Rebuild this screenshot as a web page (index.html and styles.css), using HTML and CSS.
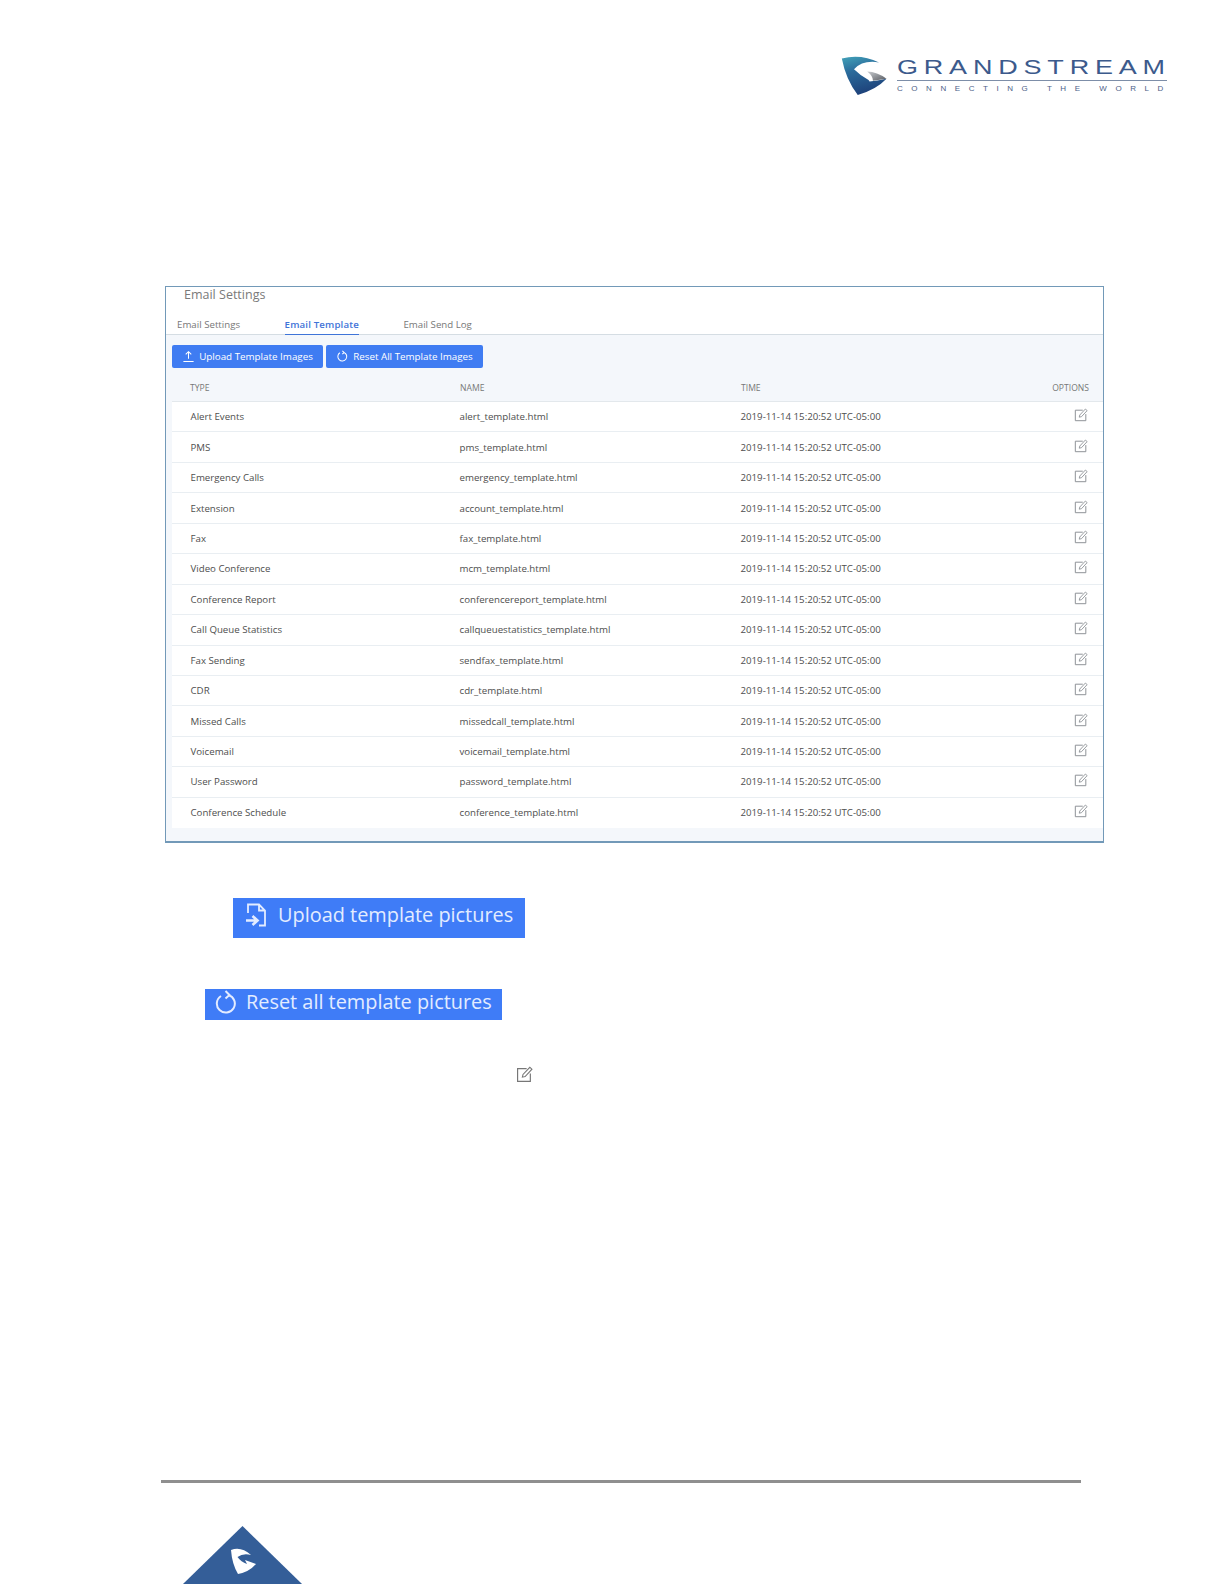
FILE: index.html
```html
<!DOCTYPE html>
<html lang="en">
<head>
<meta charset="utf-8">
<title>Email Template</title>
<link rel="stylesheet" href="styles.css">
</head>
<body>
<svg class="defs" width="0" height="0" aria-hidden="true">
  <defs>
    <symbol id="edit" viewBox="0 0 16 16">
      <path d="M10 2.5H1.5V14.5H13.5V7" fill="none" stroke="currentColor" stroke-width="1.1"/>
      <path d="M6 10.5L6.6 8L13 1.2L15 3L8.6 9.9Z" fill="none" stroke="currentColor" stroke-width="1"/>
    </symbol>
  </defs>
</svg>
<div class="page">
  <header class="top">
    <div class="logo">
      <svg class="logo-mark" viewBox="60 45 150 130">
        <defs>
          <linearGradient id="lg" x1="0.2" y1="0" x2="0.5" y2="1">
            <stop offset="0" stop-color="#3f9bb5"/>
            <stop offset="0.35" stop-color="#2b6c9c"/>
            <stop offset="1" stop-color="#1d3f78"/>
          </linearGradient>
          <linearGradient id="lh" x1="0" y1="0" x2="1" y2="1">
            <stop offset="0" stop-color="#c9ccd0"/>
            <stop offset="1" stop-color="#55595f"/>
          </linearGradient>
        </defs>
        <path d="M68 58Q125 44 178 70Q130 62 104 90Q122 108 147 122L150 126Q172 124 200 118Q170 150 115 166Q80 120 68 58Z" fill="url(#lg)"/>
        <path d="M143 97Q172 98 200 118L160 124Q160 110 143 97Z" fill="url(#lh)"/>
      </svg>
      <div class="logo-words">
        <div class="logo-name">GRANDSTREAM</div>
        <div class="logo-rule"></div>
        <div class="logo-tag">CONNECTING THE WORLD</div>
      </div>
    </div>
  </header>

  <section class="panel">
    <h1 class="panel-title">Email Settings</h1>
    <nav class="tabs">
      <span class="tab tab-first">Email Settings</span>
      <span class="tab tab-active">Email Template</span>
      <span class="tab">Email Send Log</span>
    </nav>
    <div class="panel-body">
      <div class="actions">
        <button class="btn btn-upload">
          <svg class="btn-icon" viewBox="0 0 14 14"><path d="M7 9.5V2M4 4.8L7 1.8L10 4.8M1.5 12.300H12.500" fill="none" stroke="currentColor" stroke-width="1.1"/></svg>
          Upload Template Images
        </button>
        <button class="btn btn-reset">
          <svg class="btn-icon" viewBox="0 0 14 14"><path d="M8.600 2.600A4.800 4.800 0 1 1 4.200 3M6.800 0.900L8.800 2.600L6.800 4.400" fill="none" stroke="currentColor" stroke-width="1.1"/></svg>
          Reset All Template Images
        </button>
      </div>
      <div class="row row-head"><span>TYPE</span><span>NAME</span><span>TIME</span><span class="opt">OPTIONS</span></div>
      <div class="rows">
        <div class="row"><span>Alert Events</span><span>alert_template.html</span><span>2019-11-14 15:20:52 UTC-05:00</span><svg class="opt-icon"><use href="#edit"/></svg></div>
        <div class="row"><span>PMS</span><span>pms_template.html</span><span>2019-11-14 15:20:52 UTC-05:00</span><svg class="opt-icon"><use href="#edit"/></svg></div>
        <div class="row"><span>Emergency Calls</span><span>emergency_template.html</span><span>2019-11-14 15:20:52 UTC-05:00</span><svg class="opt-icon"><use href="#edit"/></svg></div>
        <div class="row"><span>Extension</span><span>account_template.html</span><span>2019-11-14 15:20:52 UTC-05:00</span><svg class="opt-icon"><use href="#edit"/></svg></div>
        <div class="row"><span>Fax</span><span>fax_template.html</span><span>2019-11-14 15:20:52 UTC-05:00</span><svg class="opt-icon"><use href="#edit"/></svg></div>
        <div class="row"><span>Video Conference</span><span>mcm_template.html</span><span>2019-11-14 15:20:52 UTC-05:00</span><svg class="opt-icon"><use href="#edit"/></svg></div>
        <div class="row"><span>Conference Report</span><span>conferencereport_template.html</span><span>2019-11-14 15:20:52 UTC-05:00</span><svg class="opt-icon"><use href="#edit"/></svg></div>
        <div class="row"><span>Call Queue Statistics</span><span>callqueuestatistics_template.html</span><span>2019-11-14 15:20:52 UTC-05:00</span><svg class="opt-icon"><use href="#edit"/></svg></div>
        <div class="row"><span>Fax Sending</span><span>sendfax_template.html</span><span>2019-11-14 15:20:52 UTC-05:00</span><svg class="opt-icon"><use href="#edit"/></svg></div>
        <div class="row"><span>CDR</span><span>cdr_template.html</span><span>2019-11-14 15:20:52 UTC-05:00</span><svg class="opt-icon"><use href="#edit"/></svg></div>
        <div class="row"><span>Missed Calls</span><span>missedcall_template.html</span><span>2019-11-14 15:20:52 UTC-05:00</span><svg class="opt-icon"><use href="#edit"/></svg></div>
        <div class="row"><span>Voicemail</span><span>voicemail_template.html</span><span>2019-11-14 15:20:52 UTC-05:00</span><svg class="opt-icon"><use href="#edit"/></svg></div>
        <div class="row"><span>User Password</span><span>password_template.html</span><span>2019-11-14 15:20:52 UTC-05:00</span><svg class="opt-icon"><use href="#edit"/></svg></div>
        <div class="row"><span>Conference Schedule</span><span>conference_template.html</span><span>2019-11-14 15:20:52 UTC-05:00</span><svg class="opt-icon"><use href="#edit"/></svg></div>
      </div>
    </div>
  </section>

  <div class="shot shot-upload">
    <svg class="shot-icon" viewBox="0 0 22 24"><path d="M3 10V1.500H14L20 7.500V22.500H14M14 1.500V7.500H20" fill="none" stroke="currentColor" stroke-width="1.800"/><path d="M1 17.500H11M7.500 13L12.500 17.500L7.500 22" fill="none" stroke="currentColor" stroke-width="2.600"/></svg>
    <span>Upload template pictures</span>
  </div>
  <div class="shot shot-reset">
    <svg class="shot-icon" viewBox="0 0 22 24"><path d="M13.500 5A9 9 0 1 1 6 6M10.500 1L14.500 5L10.500 8.500" fill="none" stroke="currentColor" stroke-width="2"/></svg>
    <span>Reset all template pictures</span>
  </div>
  <svg class="inline-edit"><use href="#edit"/></svg>

  <footer class="foot">
    <div class="foot-rule"></div>
    <svg class="foot-mark" viewBox="0 0 120 58">
      <path d="M59.500 0L119 58H0Z" fill="#345e98"/>
      <path d="M48 24Q58 20 68 29Q60 27 54.500 31Q58 36 64 38L62 34L73 38Q66 46 55 48Q49 38 48 24Z" fill="#fff"/>
    </svg>
  </footer>
</div>
</body>
</html>
```

FILE: styles.css
```css
* { box-sizing: border-box; }
html, body { margin: 0; padding: 0; background: #fff; }
.defs { display: block; height: 0; }
.page {
  width: 1224px;
  height: 1584px;
  overflow: hidden;
  display: flex;
  flex-direction: column;
  font-family: "Open Sans", "Liberation Sans", sans-serif;
}

/* logo */
.top { display: flex; justify-content: flex-end; padding: 56px 57px 0 0; height: 286px; }
.logo { display: flex; gap: 7px; align-items: flex-start; height: 42px; }
.logo-mark { width: 51px; height: 44px; margin-top: -2px; }
.logo-words { width: 270px; }
.logo-name {
  font-family: "Liberation Sans", sans-serif;
  font-size: 20px;
  line-height: 22px;
  letter-spacing: 4.300px;
  color: #3c5a8c;
  white-space: nowrap;
  transform: scaleX(1.35);
  transform-origin: left center;
}
.logo-rule { height: 1px; margin-top: 2px; background: #7d8ea8; }
.logo-tag {
  font-family: "Liberation Sans", sans-serif;
  font-size: 8px;
  line-height: 13px;
  letter-spacing: 8.550px;
  color: #4d6288;
  white-space: nowrap;
  margin-top: 1px;
}

/* panel */
.panel {
  width: 939px;
  height: 557px;
  margin-left: 165px;
  border: 1px solid #7299b8;
  border-bottom: 2px solid #7299b8;
  display: flex;
  flex-direction: column;
  background: #fff;
}
.panel-title {
  margin: 0;
  padding-left: 18px;
  font-size: 12.500px;
  font-weight: 400;
  line-height: 16px;
  color: #7a7a7a;
}
.tabs {
  display: flex;
  height: 32px;
  padding: 14px 0 0 11px;
  border-bottom: 1px solid #d5dde3;
  font-size: 9.700px;
  line-height: 16px;
  color: #777;
}
.tab { height: 18px; margin-right: 44.500px; }
.tab-active { color: #3f74d8; font-weight: 600; letter-spacing: 0.150px; border-bottom: 1px solid #3f74d8; }
.panel-body { flex: 1; background: #f4f7fb; padding: 10px 0 0 6px; display: flex; flex-direction: column; }

.actions { display: flex; gap: 3px; height: 24px; }
.btn {
  display: flex;
  align-items: center;
  justify-content: center;
  gap: 4px;
  height: 23px;
  padding: 0;
  border: 0;
  border-radius: 2px;
  background: #3f7cf2;
  color: #fff;
  font: 400 9.800px "Open Sans", sans-serif;
}
.btn-upload { width: 151px; }
.btn-reset { width: 157px; }
.btn-icon { width: 13px; height: 13px; }

.row {
  display: grid;
  grid-template-columns: 269px 281px 1fr auto;
  align-items: center;
  height: 30.450px;
  padding: 0 14px 0 18.500px;
  background: #fff;
  border-bottom: 1px solid #e9eef2;
  font-size: 9.700px;
  color: #555;
  white-space: nowrap;
}
.row-head {
  height: 33px;
  padding-top: 6px;
  padding-left: 18px;
  grid-template-columns: 270px 281px 1fr auto;
  background: transparent;
  border-bottom: 1px solid #e3e8ec;
  font-size: 8.600px;
  color: #777;
}
.rows .row:last-child { border-bottom: 0; }
.rows .row { color: #4e4e4e; }
.opt { text-align: right; }
.opt-icon { width: 14px; height: 14px; color: #8a8f94; margin: -3px 1px 0 0; }

/* screenshot snippets */
.shot {
  display: flex;
  align-items: center;
  background: #3f7cf7;
  color: #e3ecff;
  font-size: 19.900px;
  font-weight: 500;
  white-space: nowrap;
}
.shot-upload { width: 292px; height: 40px; margin: 55px 0 0 233px; padding: 0 0 7px 12px; gap: 11px; }
.shot-reset { width: 297px; height: 31px; margin: 51px 0 0 205px; padding: 0 0 6px 10px; gap: 9px; }
.shot-icon { width: 22px; height: 24px; flex: none; }
.inline-edit { width: 17px; height: 17px; color: #777; margin: 46px 0 0 516px; flex: none; }

.foot { margin-top: auto; height: 104px; padding-left: 161px; display: flex; flex-direction: column; }
.foot-rule { width: 920px; height: 3px; background: #8f8f8f; }
.foot-mark { width: 120px; height: 58px; margin: 43px 0 0 22px; flex: none; display: block; }
```
